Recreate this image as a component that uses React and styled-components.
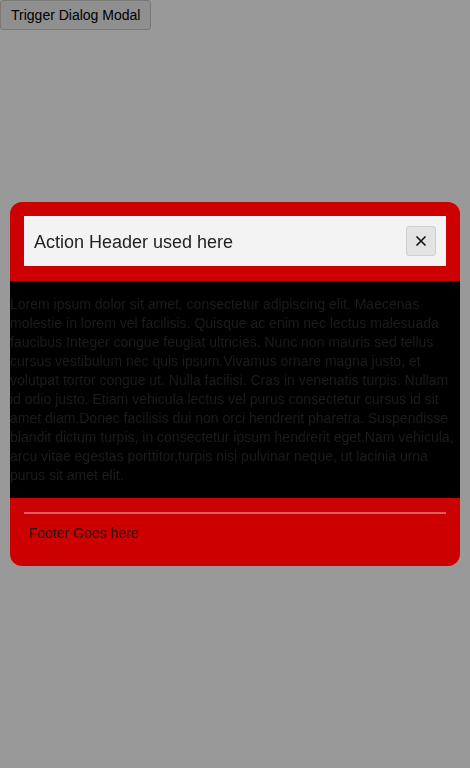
import React from 'react'
import styled, { createGlobalStyle } from 'styled-components'

const GlobalStyle = createGlobalStyle`
  html, body {
    margin: 0;
    padding: 0;
    background: #ffffff;
    font-family: "Liberation Sans", Arial, sans-serif;
  }
`

const lorem =
  'Lorem ipsum dolor sit amet, consectetur adipiscing elit. Maecenas molestie in lorem vel facilisis. Quisque ac enim nec lectus malesuada faucibus.Integer congue feugiat ultricies. Nunc non mauris sed tellus cursus vestibulum nec quis ipsum.Vivamus ornare magna justo, et volutpat tortor congue ut. Nulla facilisi. Cras in venenatis turpis. Nullam id odio justo. Etiam vehicula lectus vel purus consectetur cursus id sit amet diam.Donec facilisis dui non orci hendrerit pharetra. Suspendisse blandit dictum turpis, in consectetur ipsum hendrerit eget.Nam vehicula, arcu vitae egestas porttitor,turpis nisi pulvinar neque, ut lacinia urna purus sit amet elit.'

function App() {
  return (
    <Page>
      <GlobalStyle />
      <TriggerButton>Trigger Dialog Modal</TriggerButton>
      <Overlay>
        <Dialog>
          <Header>
            <HeaderBar>
              <Title>Action Header used here</Title>
              <CloseButton aria-label="close">
                <svg width="12" height="12" viewBox="0 0 12 12">
                  <path d="M1.5 1.5 L10.5 10.5 M10.5 1.5 L1.5 10.5" stroke="#111" strokeWidth="1.6" />
                </svg>
              </CloseButton>
            </HeaderBar>
          </Header>
          <Body>{lorem}</Body>
          <Footer>
            <Divider />
            <FooterText>Footer Goes here</FooterText>
          </Footer>
        </Dialog>
      </Overlay>
    </Page>
  )
}

const Page = styled.div`
  position: relative;
  min-height: 768px;
`

const TriggerButton = styled.button`
  display: block;
  height: 30px;
  padding: 0 10px;
  font-family: "Liberation Sans", Arial, sans-serif;
  font-size: 14px;
  color: #000;
  background: #efefef;
  border: 1px solid #c8c8c8;
  border-radius: 3px;
`

const Overlay = styled.div`
  position: fixed;
  inset: 0;
  background: rgba(0, 0, 0, 0.4);
  display: flex;
  align-items: center;
  justify-content: center;
`

const Dialog = styled.div`
  width: 450px;
  background: #cc0000;
  border-radius: 12px;
  overflow: hidden;
`

const Header = styled.div`
  padding: 14px 14px 15px;
`

const HeaderBar = styled.div`
  display: flex;
  align-items: center;
  justify-content: space-between;
  height: 50px;
  padding: 0 10px;
  box-sizing: border-box;
  background: #f3f3f3;
`

const Title = styled.span`
  font-size: 18px;
  color: #222;
  padding-top: 2px;
`

const CloseButton = styled.button`
  width: 30px;
  height: 30px;
  display: flex;
  align-items: center;
  justify-content: center;
  padding: 0;
  background: #e3e3e3;
  border: 1px solid #cfcfcf;
  border-radius: 3px;
`

const Body = styled.div`
  background: #000;
  color: #1c1c1c;
  font-size: 14px;
  line-height: 19px;
  padding: 14px 0 13px;
`

const Footer = styled.div`
  padding: 14px 14px 0;
  height: 68px;
  box-sizing: border-box;
`

const Divider = styled.div`
  height: 2px;
  background: #d96060;
`

const FooterText = styled.div`
  padding: 11px 5px;
  font-size: 14px;
  color: #2a1010;
`

export default App
